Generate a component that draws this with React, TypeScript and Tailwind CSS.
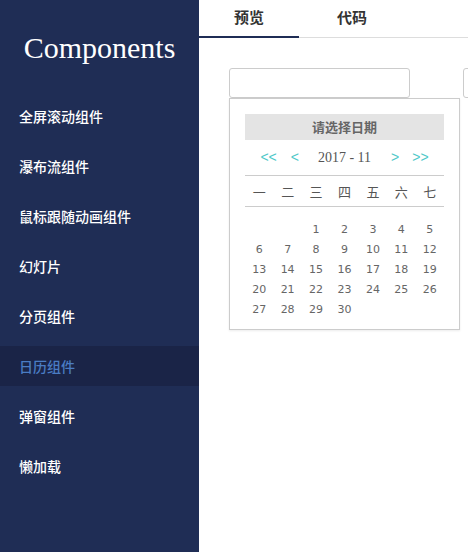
import React from 'react';

const menu = ['全屏滚动组件', '瀑布流组件', '鼠标跟随动画组件', '幻灯片', '分页组件', '日历组件', '弹窗组件', '懒加载'];
const weekdays = ['一', '二', '三', '四', '五', '六', '七'];

export default function App() {
  // November 2017 starts on a Wednesday
  const days: (number | null)[] = [null, null, ...Array.from({ length: 30 }, (_, i) => i + 1)];

  return (
    <div className="flex h-[552px] w-[468px] overflow-hidden bg-white font-['Noto_Sans_CJK_SC',sans-serif]">
      {/* Sidebar */}
      <aside className="w-[199px] shrink-0 bg-[#1f2d55]">
        <div className="h-[96px] flex items-center justify-center">
          <h1 className="font-['Liberation_Serif',serif] text-[30px] leading-none text-white">Components</h1>
        </div>
        <ul>
          {menu.map((item) => (
            <li
              key={item}
              className={
                item === '日历组件'
                  ? 'h-10 mb-[10px] flex items-center pl-[19px] text-[14px] font-medium bg-[#1a2447] text-[#4a7cc3]'
                  : 'h-10 mb-[10px] flex items-center pl-[19px] text-[14px] font-medium text-white'
              }
            >
              {item}
            </li>
          ))}
        </ul>
      </aside>

      {/* Main */}
      <main className="flex-1 min-w-0">
        <div className="flex h-[38px] border-b border-[#dddddd]">
          <div className="w-[100px] pb-[2px] flex items-center justify-center text-[15px] font-semibold text-[#333] border-b-2 border-[#1f2d55] -mb-px">
            预览
          </div>
          <div className="w-[100px] ml-[3px] pb-[2px] flex items-center justify-center text-[15px] font-semibold text-[#333]">
            代码
          </div>
        </div>

        <div className="flex pl-[30px] pt-[30px] gap-[53px]">
          <div className="w-[181px] shrink-0">
            <div className="w-[181px] h-[30px] rounded-[3px] border border-[#cccccc] bg-white" />
            <div className="w-[231px] border border-[#cccccc] bg-white shadow-[0_1px_2px_rgba(0,0,0,0.08)] px-[15px] pt-[15px] pb-[9px]">
              <div className="h-[26px] bg-[#e4e4e4] flex items-center justify-center text-[13px] font-bold text-[#666]">
                请选择日期
              </div>
              <div className="h-[36px] border-b border-[#cccccc] flex items-center justify-center">
                <span className="font-['Liberation_Sans',sans-serif] text-[14px] text-[#4fc9c9]">&lt;&lt;</span>
                <span className="ml-[14px] font-['Liberation_Sans',sans-serif] text-[14px] text-[#4fc9c9]">&lt;</span>
                <span className="ml-[19px] font-['Liberation_Serif',serif] text-[14px] text-[#555]">2017 - 11</span>
                <span className="ml-[20px] font-['Liberation_Sans',sans-serif] text-[14px] text-[#4fc9c9]">&gt;</span>
                <span className="ml-[13px] font-['Liberation_Sans',sans-serif] text-[14px] text-[#4fc9c9]">&gt;&gt;</span>
              </div>
              <div className="h-[31px] pt-[1px] border-b border-[#cccccc] grid grid-cols-7 items-center">
                {weekdays.map((w) => (
                  <span key={w} className="text-center text-[13px] text-[#555]">
                    {w}
                  </span>
                ))}
              </div>
              <div className="grid grid-cols-7 pt-[13px]">
                {days.map((d, i) => (
                  <span
                    key={i}
                    className="h-5 flex items-center justify-center font-['DejaVu_Sans',sans-serif] text-[11px] text-[#666]"
                  >
                    {d ?? ''}
                  </span>
                ))}
              </div>
            </div>
          </div>
          <div className="w-[181px] h-[30px] shrink-0 rounded-[3px] border border-[#cccccc] bg-white" />
        </div>
      </main>
    </div>
  );
}
